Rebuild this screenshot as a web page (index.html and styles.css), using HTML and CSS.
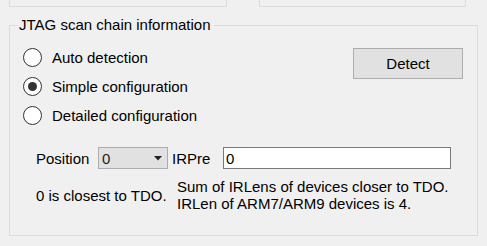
FILE: index.html
```html
<!DOCTYPE html>
<html>
<head>
<meta charset="utf-8">
<link rel="stylesheet" href="styles.css">
</head>
<body>
<div class="top">
  <div class="topbox topbox-left"></div>
  <div class="topbox topbox-right"></div>
</div>
<section class="group">
  <div class="group-title">JTAG scan chain information</div>
  <div class="upper">
    <div class="radios">
      <label class="radio"><input type="radio" name="mode"><span>Auto detection</span></label>
      <label class="radio"><input type="radio" name="mode" checked><span>Simple configuration</span></label>
      <label class="radio"><input type="radio" name="mode"><span>Detailed configuration</span></label>
    </div>
    <button class="btn">Detect</button>
  </div>
  <div class="fields">
    <span class="lbl lbl-pos">Position</span>
    <div class="combo"><span class="combo-val">0</span><svg class="combo-arrow" width="8" height="5" viewBox="0 0 8 5"><path d="M0 0H8L4 4.5Z" fill="#222"/></svg></div>
    <span class="lbl lbl-ir">IRPre</span>
    <input class="text" type="text" value="0">
  </div>
  <div class="notes">
    <span class="note1">0 is closest to TDO.</span>
    <span class="note2">Sum of IRLens of devices closer to TDO.<br>IRLen of ARM7/ARM9 devices is 4.</span>
  </div>
</section>
</body>
</html>
```
FILE: styles.css
```css
html, body {
  margin: 0;
  padding: 0;
}
body {
  background: #f0f0f0;
  font-family: "Liberation Sans", Arial, sans-serif;
  font-size: 15px;
  color: #000;
  width: 487px;
  height: 246px;
  overflow: hidden;
}
.top {
  display: flex;
  height: 7px;
  padding-left: 9px;
}
.topbox {
  box-sizing: border-box;
  height: 7px;
  border: 1px solid #dcdcdc;
  border-top: none;
}
.topbox-left {
  width: 218px;
}
.topbox-right {
  width: 207px;
  margin-left: 32px;
}
.group {
  box-sizing: border-box;
  width: 469px;
  margin: 18px 0 0 9px;
  padding: 0 0 23px 0;
  border: 1px solid #dcdcdc;
}
.group-title {
  display: table;
  margin: -11px 0 0 7px;
  padding: 0 4px 0 2px;
  line-height: 20px;
  background: #f0f0f0;
}
.upper {
  display: flex;
  justify-content: space-between;
  align-items: flex-start;
  margin-top: 8px;
}
.radios {
  display: flex;
  flex-direction: column;
  padding-left: 13px;
}
.radio {
  display: flex;
  align-items: center;
  height: 29px;
  gap: 10px;
}
.radio input {
  appearance: none;
  -webkit-appearance: none;
  margin: 0;
  width: 19px;
  height: 19px;
  border: 1px solid #333;
  border-radius: 50%;
  background: #fff;
  box-sizing: border-box;
  display: grid;
  place-items: center;
}
.radio input:checked::after {
  content: "";
  width: 9px;
  height: 9px;
  border-radius: 50%;
  background: #333;
}
.btn {
  box-sizing: border-box;
  width: 110px;
  height: 31px;
  margin: 5px 14px 0 0;
  border: 1px solid #adadad;
  background: #e1e1e1;
  font: inherit;
  color: #000;
  padding: 0;
}
.fields {
  display: flex;
  align-items: center;
  margin-top: 17px;
  padding-left: 26px;
}
.lbl-pos {
  width: 62px;
}
.combo {
  box-sizing: border-box;
  width: 70px;
  height: 22px;
  border: 1px solid #adadad;
  background: #e1e1e1;
  display: flex;
  align-items: center;
  justify-content: space-between;
  padding: 0 5px 0 3px;
}
.combo-val {
  color: #222;
}
.lbl-ir {
  width: 51px;
  margin-left: 4px;
}
.text {
  box-sizing: border-box;
  width: 228px;
  height: 22px;
  border: 1px solid #7a7a7a;
  background: #fff;
  font: inherit;
  padding: 0 0 0 2px;
  margin: 0;
  outline: none;
}
.notes {
  display: flex;
  align-items: center;
  margin-top: 9px;
  padding-left: 26px;
  line-height: 17px;
}
.note1 {
  width: 141px;
}
```
